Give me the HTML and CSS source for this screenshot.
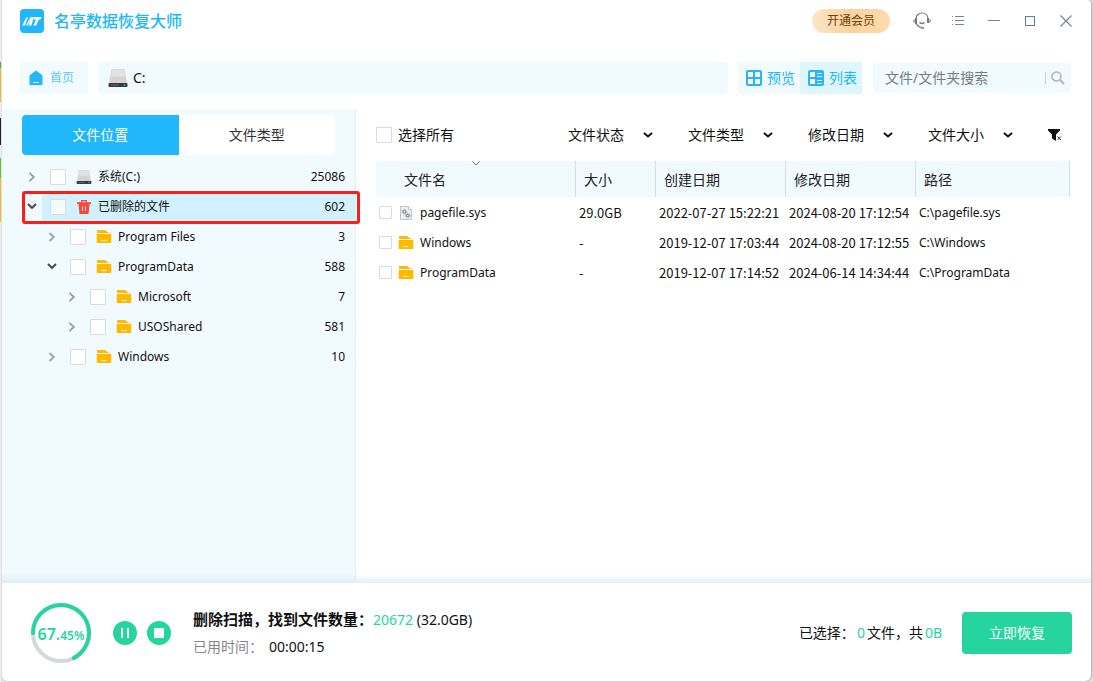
FILE: index.html
```html
<!DOCTYPE html>
<html lang="zh-CN">
<head>
<meta charset="utf-8">
<title>名亭数据恢复大师</title>
<link rel="stylesheet" href="styles.css">
</head>
<body>
<svg class="defs" aria-hidden="true">
  <symbol id="folder" viewBox="0 0 16 14"><path d="M1 0h8l4 3H1z" fill="#ffb900"/><path d="M9.500 0.500L13 3h2V2H12z" fill="#ffe08a"/><path d="M1 4h14v9H1z" fill="#ffb900"/><path d="M0 4h1v9H0zM15 4h1v9h-1z" fill="#ffe9ae"/><path d="M5.500 10.500h5" stroke="#fff3cf" stroke-width="1"/></symbol>
  <symbol id="drive" viewBox="0 0 20 18"><path d="M3.500 0h13L19 14H1z" fill="#d4d4d4"/><path d="M4 0.500h12l1 7H3z" fill="#e2e2e2"/><rect x="0.500" y="14" width="19" height="4" rx="1" fill="#3b3b40"/><path d="M3 16h8" stroke="#68686e"/><circle cx="16.500" cy="16" r="1" fill="#20b573"/></symbol>
  <symbol id="right" viewBox="0 0 8 10"><path d="M1.500 1l4.300 4-4.300 4" fill="none" stroke="#98a1a6" stroke-width="1.800"/></symbol>
  <symbol id="down" viewBox="0 0 10 7"><path d="M1 1l4 3.900 4-3.900" fill="none" stroke="#3c464b" stroke-width="2"/></symbol>
</svg>
<div class="window">
  <header class="titlebar">
    <svg class="logo" viewBox="0 0 24 24"><rect width="24" height="24" rx="4" fill="#21b7fb"/><path d="M2.200 16.500L5.800 9.500Q6.600 8 8 8L4.800 16.500zM5.800 16.500L10 9Q10.600 8 12 8h1.800L11.400 16.500H8.600l1.500-5.500-2.600 5.500zM14.200 8H21.500L20.500 10.400h-1.700l-2.600 6.100h-2.800l2.600-6.100h-2.500z" fill="#fff"/></svg>
    <h1 class="brand">名亭数据恢复大师</h1>
    <button class="vip">开通会员</button>
    <div class="controls">
      <button aria-label="客服"><svg width="18" height="18" viewBox="0 0 18 18" fill="none" stroke="#777" stroke-width="1.200"><path d="M3 7c0-8 12-8 12 0M3 11c1 2.500 3 4 5.500 4.500"/><path d="M3 6v6M15 6v5" stroke-width="2"/><path d="M1 7.500v3M17 7.500v3" /><path d="M6.500 10.500q2.500 2 5 0M8 16h3" stroke-width="1.500"/></svg></button>
      <button aria-label="菜单"><svg width="14" height="12" viewBox="0 0 14 12" stroke="#718798"><path d="M1 1.500h1M4 1.500h9M1 5.500h1M4 5.500h9M1 9.500h1M4 9.500h9"/></svg></button>
      <button aria-label="最小化"><svg width="12" height="12" viewBox="0 0 12 12" stroke="#718798"><path d="M0 5.500h12"/></svg></button>
      <button aria-label="最大化"><svg width="12" height="12" viewBox="0 0 12 12" fill="none" stroke="#5d7f9b"><rect x="1.500" y="1.500" width="9" height="9"/></svg></button>
      <button aria-label="关闭"><svg width="12" height="12" viewBox="0 0 12 12" stroke="#718798" stroke-width="1.200"><path d="M0.500 0.500l11 11M11.500 0.500l-11 11"/></svg></button>
    </div>
  </header>

  <nav class="toolbar">
    <button class="home"><svg width="14" height="14" viewBox="0 0 14 14"><path d="M7 0l6 4.500V14H1V4.500z" fill="#21b7fb" stroke="#21b7fb" stroke-linejoin="round"/><path d="M4 11.500h6" stroke="#fff"/></svg>首页</button>
    <div class="path"><svg width="20" height="18"><use href="#drive"/></svg>C:</div>
    <div class="views">
      <button><svg width="16" height="16" viewBox="0 0 16 16"><rect width="16" height="16" rx="2" fill="#21b7fb"/><path d="M2 2h5v5H2zM9 2h5v5H9zM2 9h5v5H2zM9 9h5v5H9z" fill="#fff"/></svg>预览</button>
      <button class="active"><svg width="16" height="16" viewBox="0 0 16 16"><rect width="16" height="16" rx="2" fill="#21b7fb"/><path d="M2 2h5v5H2zM2 9h5v5H2zM9 3h5v1H9zM9 6h5v1H9zM9 10h5v1H9zM9 13h5v1H9z" fill="#fff"/></svg>列表</button>
    </div>
    <div class="search">
      <input type="text" placeholder="文件/文件夹搜索" aria-label="文件/文件夹搜索">
      <button aria-label="搜索"><svg width="14" height="14" viewBox="0 0 14 14" fill="none" stroke="#b0b4b6"><circle cx="5.500" cy="5.500" r="4.500" stroke-width="1.500"/><path d="M9 9l4 4" stroke-width="2"/></svg></button>
    </div>
  </nav>

  <main class="body">
    <aside class="sidebar">
      <div class="tabs"><button class="active">文件位置</button><button>文件类型</button></div>
      <ul class="tree">
        <li><svg class="arrow"><use href="#right"/></svg><label><input type="checkbox"><svg class="icon"><use href="#drive"/></svg><span>系统(C:)</span><b>25086</b></label></li>
        <li class="selected"><svg class="arrow open"><use href="#down"/></svg><label><input type="checkbox"><svg class="icon" viewBox="0 0 16 14"><path d="M1 2.200h14v1.800H1zM5 2.500V0h6v2.500H9.700V1.200H6.300v1.300zM2.500 4h11l-1 10h-9z" fill="#f5473b"/><path d="M6.500 6.500v4.500M9.500 6.500v4.500" stroke="#f9c4c4" stroke-width="1.200"/></svg><span>已删除的文件</span><b>602</b></label></li>
        <li class="l1"><svg class="arrow"><use href="#right"/></svg><label><input type="checkbox"><svg class="icon"><use href="#folder"/></svg><span>Program Files</span><b>3</b></label></li>
        <li class="l1"><svg class="arrow open"><use href="#down"/></svg><label><input type="checkbox"><svg class="icon"><use href="#folder"/></svg><span>ProgramData</span><b>588</b></label></li>
        <li class="l2"><svg class="arrow"><use href="#right"/></svg><label><input type="checkbox"><svg class="icon"><use href="#folder"/></svg><span>Microsoft</span><b>7</b></label></li>
        <li class="l2"><svg class="arrow"><use href="#right"/></svg><label><input type="checkbox"><svg class="icon"><use href="#folder"/></svg><span>USOShared</span><b>581</b></label></li>
        <li class="l1"><svg class="arrow"><use href="#right"/></svg><label><input type="checkbox"><svg class="icon"><use href="#folder"/></svg><span>Windows</span><b>10</b></label></li>
      </ul>
    </aside>

    <section class="files">
      <div class="filters">
        <label class="all"><input type="checkbox">选择所有</label>
        <select aria-label="文件状态"><option>文件状态</option></select>
        <select aria-label="文件类型"><option>文件类型</option></select>
        <select aria-label="修改日期"><option>修改日期</option></select>
        <select aria-label="文件大小"><option>文件大小</option></select>
        <button class="clear" aria-label="清除筛选"><svg width="14" height="14" viewBox="0 0 14 14"><path d="M0 1h12v1.500L8 6.500V13l-4-2.500v-4L0 2.500z" fill="#111"/><path d="M9.500 8.500l3.500 3.500M13 8.500L9.500 12" stroke="#333"/></svg></button>
      </div>
      <table>
        <colgroup><col class="c-name"><col class="c-size"><col class="c-date"><col class="c-date"><col></colgroup>
        <thead><tr><th><svg class="sort" width="8" height="5" viewBox="0 0 8 5"><path d="M0.500 0.500L4 4l3.500-3.500" fill="none" stroke="#777"/></svg>文件名</th><th>大小</th><th>创建日期</th><th>修改日期</th><th>路径</th></tr></thead>
        <tbody>
          <tr><td><label><input type="checkbox"><svg class="icon" viewBox="0 0 16 14"><path d="M2.500 0.500h8l3 3v10h-11z" fill="#eef1f2" stroke="#bfc4c7"/><path d="M10.500 0.500v3h3" fill="#fff" stroke="#bfc4c7"/><g fill="none" stroke="#93a1a8"><circle cx="6.300" cy="5.700" r="1.300" stroke-width="1.400"/><circle cx="6.300" cy="5.700" r="2.300" stroke-dasharray="1 0.800"/><circle cx="9.800" cy="9.500" r="1.300" stroke-width="1.400"/><circle cx="9.800" cy="9.500" r="2.300" stroke-dasharray="1 0.800"/></g></svg>pagefile.sys</label></td><td>29.0GB</td><td>2022-07-27 15:22:21</td><td>2024-08-20 17:12:54</td><td class="loc">C:\pagefile.sys</td></tr>
          <tr><td><label><input type="checkbox"><svg class="icon"><use href="#folder"/></svg>Windows</label></td><td>-</td><td>2019-12-07 17:03:44</td><td>2024-08-20 17:12:55</td><td class="loc">C:\Windows</td></tr>
          <tr><td><label><input type="checkbox"><svg class="icon"><use href="#folder"/></svg>ProgramData</label></td><td>-</td><td>2019-12-07 17:14:52</td><td>2024-06-14 14:34:44</td><td class="loc">C:\ProgramData</td></tr>
        </tbody>
      </table>
    </section>
  </main>

  <footer class="status">
    <div class="ring">
      <svg viewBox="0 0 60 60" fill="none" stroke-width="4"><circle cx="30" cy="30" r="28" stroke="#d0d9dc"/><circle cx="30" cy="30" r="28" stroke="#26d59d" stroke-linecap="round" pathLength="100" stroke-dasharray="67.450 100" transform="rotate(180 30 30)"/></svg>
      <span class="percent">67.<small>45%</small></span>
    </div>
    <button class="round" aria-label="暂停"><svg viewBox="0 0 24 24"><circle cx="12" cy="12" r="12" fill="#26d59d"/><path d="M8 7h2v10H8zM14 7h2v10h-2z" fill="#fff"/></svg></button>
    <button class="round" aria-label="停止"><svg viewBox="0 0 24 24"><circle cx="12" cy="12" r="12" fill="#26d59d"/><rect x="7" y="7" width="10" height="10" rx="1" fill="#fff"/></svg></button>
    <div class="progress">
      <p><strong>删除扫描，找到文件数量：</strong><em>20672</em> (32.0GB)</p>
      <p><span class="muted">已用时间：</span>00:00:15</p>
    </div>
    <p class="chosen">已选择：<em>0</em>文件，共<em>0B</em></p>
    <button class="recover">立即恢复</button>
  </footer>
</div>
</body>
</html>
```

FILE: styles.css
```css
* { box-sizing: border-box; }
body {
  margin: 0;
  min-height: 100vh;
  display: flex;
  padding: 0 2px 1px 2px;
  background: linear-gradient(#eee 0 62px, #43b54a 62px 68px, #f3ba2e 68px 102px, #eee 102px 118px, #222 118px 145px, #eee 145px 158px, #5cc83a 158px 178px, #f5b92e 178px 222px, #eee 222px) left / 1px 100% no-repeat, #e2e2e2;
  color: #111;
  font: 14px/20px "Noto Sans", "Noto Sans CJK SC", sans-serif;
}
button, input, select { font: inherit; color: inherit; margin: 0; padding: 0; border: 0; background: none; }
button { cursor: pointer; }
svg { display: block; flex: none; }
p, h1, ul { margin: 0; padding: 0; list-style: none; }
em { font-style: normal; color: #26d59d; }
.defs { position: absolute; width: 0; height: 0; }
input[type=checkbox] {
  appearance: none;
  flex: none;
  width: 16px;
  height: 16px;
  border: 1px solid #d9dcdd;
  border-radius: 1px;
  background: #fff;
}
.window {
  flex: 1;
  display: flex;
  flex-direction: column;
  background: #fff;
  border-radius: 0 4px 6px 6px;
  box-shadow: 1px 0 2px #aaa;
}

.titlebar { display: flex; align-items: center; height: 42px; padding: 0 7px 0 18px; }
.logo { width: 24px; height: 24px; margin-right: 10px; }
.brand { font-size: 16px; font-weight: 500; color: #21b7fb; }
.vip {
  margin-left: auto;
  width: 78px;
  height: 24px;
  border-radius: 12px;
  background: linear-gradient(90deg, #fde5c6, #fad29f 50%, #fedcae);
  color: #6e410c;
  font-size: 12px;
}
.controls { display: flex; margin-left: 14px; }
.controls button { display: grid; place-items: center; width: 36px; height: 36px; }

.toolbar { display: flex; height: 32px; margin: 20px 20px 15px 18px; }
.toolbar button { display: flex; align-items: center; }
.home { width: 68px; gap: 7px; margin-right: 10px; background: #f1faff; color: #62c7f7; font-size: 12px; }
.toolbar .home { padding-left: 9px; }
.path { flex: 1; display: flex; align-items: center; gap: 5px; padding-left: 10px; background: #f1faff; border-radius: 4px; }
.views { display: flex; margin: 0 11px 0 10px; color: #21b7fb; }
.views button { width: 62px; padding-left: 8px; gap: 5px; background: #f1faff; }
.views .active { background: #dff6ff; }
.search { display: flex; align-items: center; width: 198px; height: 30px; margin-top: 1px; padding-left: 12px; background: #f1faff; border-radius: 3px; }
.search input { flex: 1; min-width: 0; outline: 0; }
.search input::placeholder { color: #757b7f; opacity: 1; }
.search button { height: 12px; padding: 0 6px 0 5px; border-left: 1px solid #ccd3d6; }

.body { flex: 1; display: flex; box-shadow: inset 0 -8px 8px -6px #d5e8f1; }
.sidebar { width: 354px; border-right: 1px solid #e3edf1; background: linear-gradient(#f1faff calc(100% - 10px), #dfeef6); }
.tabs { display: flex; margin: 6px 20px 7px; height: 40px; border-radius: 4px; overflow: hidden; background: #fff; }
.tabs button { flex: 1; color: #333; }
.tabs .active { background: #21b7fb; color: #fff; }
.tree { font-size: 12px; }
.tree li { position: relative; display: flex; align-items: center; height: 30px; padding-left: 20px; }
.tree .l1 { padding-left: 40px; }
.tree .l2 { padding-left: 60px; }
.tree label { flex: 1; display: flex; align-items: center; height: 30px; padding: 0 10px 0 8px; }
.tree b { margin-left: auto; font-weight: 400; }
.arrow { width: 8px; height: 10px; margin: 0 6px; }
.arrow.open { width: 10px; height: 7px; margin: 0 5px 2px 5px; }
.icon { width: 16px; height: 14px; margin: 0 6px 0 10px; }
.selected label { background: #d2f1fe; }
.selected input[type=checkbox] { background: #f3fbff; }
.selected::after {
  content: "";
  position: absolute;
  inset: -1px -5px -2px 20px;
  border: 3px solid #fb1d17;
  border-radius: 3px;
  pointer-events: none;
}

.files { flex: 1; padding: 10px 21px 0 20px; }
.filters { display: flex; align-items: center; height: 32px; margin-bottom: 10px; }
.all { display: flex; align-items: center; gap: 6px; margin-right: auto; }
.filters select {
  appearance: none;
  width: 86px;
  margin-right: 34px;
  background: url("data:image/svg+xml,%3Csvg xmlns='http://www.w3.org/2000/svg' width='10' height='7'%3E%3Cpath d='M1 1l4 3.500 4-3.500' fill='none' stroke='%23111' stroke-width='2'/%3E%3C/svg%3E") right 1px center no-repeat;
}
.clear { margin-right: 8px; }
table { width: 100%; border-collapse: separate; border-spacing: 0; table-layout: fixed; font-size: 12px; }
.c-name { width: 200px; }
.c-size { width: 80px; }
.c-date { width: 130px; }
th {
  position: relative;
  height: 36px;
  padding: 2px 0 0 8px;
  border-right: 1px solid #d5dfe3;
  background: #f1faff;
  color: #222;
  font-size: 14px;
  font-weight: 400;
  text-align: left;
}
th:first-child { padding-left: 28px; }
.sort { position: absolute; left: 48%; top: 0; }
td { height: 30px; padding: 1px 0 0 3px; font-family: "Noto Sans CJK SC", sans-serif; font-size: 13px; white-space: nowrap; }
td:first-child, td.loc { font: 12px/20px "Noto Sans", sans-serif; }
td label { display: flex; align-items: center; }
td .icon { margin: 0 6px; }
td input[type=checkbox] { width: 13px; height: 13px; }

.status { display: flex; align-items: center; height: 98px; padding: 2px 19px 0 29px; }
.ring { display: grid; place-items: center; width: 60px; height: 60px; margin-right: 22px; }
.ring > * { grid-area: 1 / 1; }
.ring svg { width: 60px; height: 60px; }
.percent { padding-top: 4px; color: #26d59d; font-size: 16px; font-weight: 600; white-space: nowrap; }
.percent small { font-size: 12px; }
.round { margin-right: 10px; }
.round svg { width: 24px; height: 24px; }
.progress { display: grid; gap: 7px; margin-left: 12px; }
.progress strong { font-size: 15px; }
.muted { display: inline-block; width: 76px; color: #888; }
.chosen { display: flex; gap: 2px; margin-left: auto; margin-right: 20px; }
.recover { width: 110px; height: 42px; border-radius: 4px; background: #26d59d; color: #fff; }
```
